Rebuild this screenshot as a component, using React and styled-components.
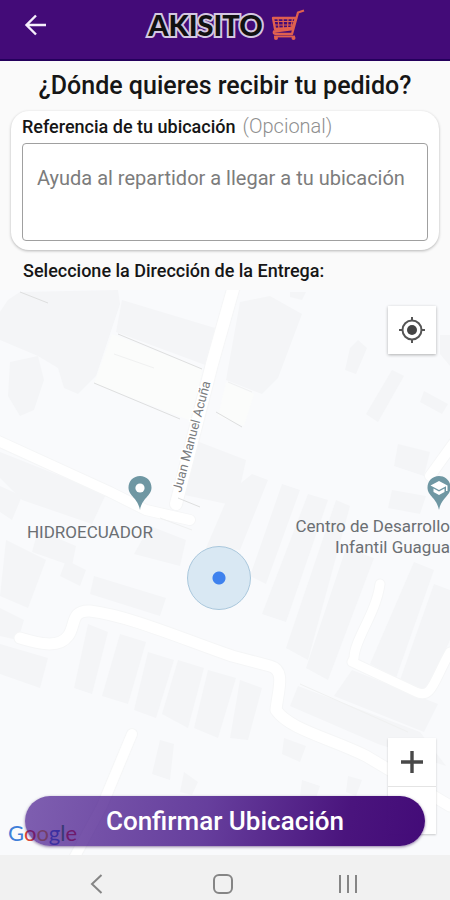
import React from 'react';
import styled, { createGlobalStyle } from 'styled-components';

const parcels = [
	'M8 300 L20 292 L118 290 L120 304 L96 376 L78 394 L64 388 L58 368 L38 356 L0 340 L0 312 Z',
	'M122 300 L215 328 L208 366 L116 332 Z',
	'M10 362 L38 356 L44 380 L34 410 L20 416 L8 396 Z',
	'M240 302 L270 296 L302 314 L278 378 L262 394 L226 380 Z',
	'M290 292 L306 292 L302 300 L290 297 Z',
	'M350 348 L358 340 L367 348 L356 374 L345 370 Z',
	'M392 370 L404 376 L378 422 L366 414 Z',
	'M424 391 L448 404 L442 414 L420 402 Z',
	'M398 444 L430 452 L424 476 L394 466 Z',
	'M194 440 L246 460 L236 506 L180 494 Z',
	'M0 452 L106 494 L92 524 L22 500 L0 478 Z',
	'M22 496 L12 520 L0 512 L0 486 Z',
	'M252 474 L268 480 L240 550 L206 548 L230 492 Z',
	'M282 484 L300 490 L266 584 L250 576 Z',
	'M308 494 L328 500 L286 622 L262 614 Z',
	'M336 500 L350 506 L308 660 L286 648 Z',
	'M346 548 L374 558 L328 680 L306 668 Z',
	'M414 562 L434 570 L396 678 L370 664 Z',
	'M434 584 L450 590 L450 640 L426 694 L400 680 Z',
	'M6 540 L46 560 L28 608 L0 596 Z',
	'M38 530 L76 546 L72 566 L32 552 Z',
	'M66 560 L86 570 L80 586 L60 576 Z',
	'M94 576 L166 598 L160 616 L90 594 Z',
	'M0 608 L24 620 L18 640 L0 636 Z',
	'M0 644 L48 658 L40 688 L0 674 Z',
	'M88 624 L108 632 L92 694 L74 688 Z',
	'M120 634 L146 642 L128 704 L102 696 Z',
	'M148 652 L174 660 L156 718 L134 710 Z',
	'M178 660 L204 668 L188 728 L162 714 Z',
	'M208 670 L236 678 L218 738 L194 728 Z',
	'M240 680 L262 688 L248 740 L230 738 Z',
	'M298 686 L420 732 L446 766 L378 744 L290 706 Z',
	'M352 670 L438 704 L424 732 L334 696 Z',
	'M160 740 L174 744 L170 780 L152 774 Z',
	'M284 738 L306 746 L300 762 L282 754 Z',
	'M302 780 L320 786 L316 798 L300 796 Z',
	'M348 776 L362 780 L356 796 L346 792 Z',
	'M184 772 L198 782 L192 795 L180 792 Z',
	'M440 335 L450 335 L450 366 L440 354 Z',
	'M392 490 L426 496 L420 514 L388 508 Z',
	'M150 526 L186 540 L180 566 L134 554 Z',
];

const streets = [
	{ d: 'M234 286 L212 364 L176 504', width: 12 },
	{ d: 'M-4 440 L110 492 L146 510 L190 520', width: 10 },
	{ d: 'M20 638 C34 642 58 650 68 636 C76 626 70 610 90 611 C130 616 180 638 232 656 L270 666 C286 670 278 690 276 710 C290 730 330 738 366 756 L450 806', width: 11 },
	{ d: 'M380 584 C376 614 354 640 354 658 L352 662 L416 692 C432 700 434 680 450 652', width: 9 },
	{ d: 'M132 734 L102 806 L72 862', width: 10 },
	{ d: 'M456 440 L430 476', width: 10 },
];

const googleLetters = [
	['G', '#3f7fd9'],
	['o', '#dc4437'],
	['o', '#e3a62c'],
	['g', '#3f7fd9'],
	['l', '#35a053'],
	['e', '#dc4437'],
];

const App = () => (
	<Page>
		<GlobalStyle />
		<TopBar>
			<BackButton type="button" aria-label="Volver">
				<svg width="24" height="24" viewBox="0 0 24 24" fill="none" stroke="#f6effc" strokeWidth="2.4">
					<path d="M22 12H3M12 2.5L2.5 12L12 21.5" />
				</svg>
			</BackButton>
			<Logo>
				<LogoText>AKISITO</LogoText>
				<CartIcon />
			</Logo>
		</TopBar>

		<Title>¿Dónde quieres recibir tu pedido?</Title>

		<ReferenceCard>
			<LabelRow>
				<label htmlFor="reference">Referencia de tu ubicación</label>
				<Optional>(Opcional)</Optional>
			</LabelRow>
			<ReferenceInput id="reference" placeholder="Ayuda al repartidor a llegar a tu ubicación" />
		</ReferenceCard>

		<MapHeading>Seleccione la Dirección de la Entrega:</MapHeading>

		<MapArea>
			<MapDrawing />
			<Place $left="31%" $top="33%">
				<Pin />
			</Place>
			<PlaceName $right="66%" $top="41%">
				HIDROECUADOR
			</PlaceName>
			<Place $left="97.5%" $top="33%">
				<Pin school />
			</Place>
			<PlaceName $right="0" $top="40%">
				Centro de Desarrollo
				<br />
				Infantil Guagua
			</PlaceName>
			<CurrentPosition />

			<LocateButton type="button" aria-label="Mi ubicación">
				<svg width="28" height="28" viewBox="0 0 28 28" fill="none" stroke="#555" strokeWidth="2">
					<circle cx="14" cy="14" r="9.5" />
					<circle cx="14" cy="14" r="5" fill="#444" stroke="none" />
					<path d="M14 1V5M14 23V27M1 14H5M23 14H27" />
				</svg>
			</LocateButton>
			<ZoomControls>
				<MapButton type="button" aria-label="Acercar">
					<svg width="22" height="22" viewBox="0 0 22 22" stroke="#484848" strokeWidth="3.4">
						<path d="M11 0V22M0 11H22" />
					</svg>
				</MapButton>
				<MapButton type="button" aria-label="Alejar" />
			</ZoomControls>
			<GoogleMark>
				{googleLetters.map(([letter, color], i) => (
					<Letter key={i} $color={color}>
						{letter}
					</Letter>
				))}
			</GoogleMark>
			<ConfirmButton type="button">Confirmar Ubicación</ConfirmButton>
		</MapArea>

		<SystemNav>
			<NavButton type="button" aria-label="Atrás">
				<svg width="22" height="22" viewBox="0 0 22 22" fill="none" stroke="#858585" strokeWidth="2">
					<path d="M15.5 2L6 11L15.5 20" />
				</svg>
			</NavButton>
			<NavButton type="button" aria-label="Inicio">
				<svg width="22" height="22" viewBox="0 0 22 22" fill="none" stroke="#858585" strokeWidth="2">
					<rect x="2" y="2" width="18" height="18" rx="5" />
				</svg>
			</NavButton>
			<NavButton type="button" aria-label="Recientes">
				<svg width="22" height="22" viewBox="0 0 22 22" fill="none" stroke="#858585" strokeWidth="2">
					<path d="M3 2V20M11 2V20M19 2V20" />
				</svg>
			</NavButton>
		</SystemNav>
	</Page>
);

export default App;

const CartIcon = () => (
	<svg width="34" height="32" viewBox="0 0 34 32" fill="none" stroke="#e0604f" strokeWidth="2.3" strokeLinejoin="round">
		<path d="M33 1.5L27 3.5L21 25H5Q2 25 3 22.5L22 20" />
		<path d="M2 9H25L21.5 19L4 20Z" />
		<path d="M7 9L8 20M12 9L12.5 20M17 9L16.5 20M21.5 9L20 19M3 12.5H24M3.5 16H23" strokeWidth="1.2" />
		<path d="M3 27.5H24" strokeWidth="1.8" />
		<circle cx="5" cy="29" r="2" fill="#e0604f" stroke="none" />
		<circle cx="22.5" cy="29" r="2" fill="#e0604f" stroke="none" />
	</svg>
);

const Pin = ({ school }) => (
	<svg width="24" height="34" viewBox="0 0 24 34">
		<path d="M12 0C5.4 0 0.5 5 0.5 11.5C0.5 20 10 22 12 34C14 22 23.5 20 23.5 11.5C23.5 5 18.6 0 12 0Z" fill="#6f97a3" />
		{school ? (
			<g fill="#fff">
				<path d="M12 5L3.5 9.5L12 14L19 10.3V15H20.5V9.5Z" />
				<path d="M6.5 12.5V16L12 19L17.5 16V12.5L12 15.5Z" />
			</g>
		) : (
			<circle cx="12" cy="12" r="4.6" fill="#fff" />
		)}
	</svg>
);

const MapDrawing = () => (
	<MapSvg viewBox="0 290 450 565" preserveAspectRatio="xMidYMid slice" aria-hidden="true">
		<path d="M112 334 L202 369 L194 422 L94 383 Z" fill="#fbfcfb" />
		<path d="M226 382 L254 394 L244 426 L218 416 Z" fill="#fbfcfb" />
		{parcels.map(d => (
			<path key={d} d={d} fill="#f4f5f7" />
		))}
		{streets.map(street => (
			<g key={street.d} fill="none" strokeLinejoin="round" strokeLinecap="round">
				<path d={street.d} stroke="#f5f6f7" strokeWidth={street.width + 2} />
				<path d={street.d} stroke="#fff" strokeWidth={street.width} />
			</g>
		))}
		<g fill="none" stroke="#dedfdf">
			<path d="M20 292L48 303M118 334L202 369M94 383L180 419M216 412L242 427M178 498L200 507" />
			<path d="M114 354L154 368M228 382L252 392M300 684L408 732M160 518L192 530" stroke="#f0f1f1" />
		</g>
		<StreetName transform="translate(181 493) rotate(-75)">Juan Manuel Acuña</StreetName>
	</MapSvg>
);

const GlobalStyle = createGlobalStyle`
	* {
		box-sizing: border-box;
	}
	body {
		margin: 0;
		background: #fafafa;
		font-family: Roboto, sans-serif;
	}
	button {
		border: 0;
		padding: 0;
		font-family: inherit;
		cursor: pointer;
	}
`;

const Page = styled.div`
	display: flex;
	flex-direction: column;
	min-height: 100vh;
	color: #161616;
	overflow: hidden;
`;

const TopBar = styled.header`
	display: grid;
	grid-template-columns: 72px 1fr 72px;
	align-items: center;
	height: 61px;
	padding-bottom: 10px;
	background: #430b78;
	border-bottom: 2px solid #24005c;
`;

const BackButton = styled.button`
	display: flex;
	align-items: center;
	justify-content: center;
	height: 48px;
	background: transparent;
`;

const Logo = styled.div`
	display: flex;
	align-items: center;
	justify-content: center;
	gap: 8px;
	padding-left: 3px;
`;

const LogoText = styled.span`
	font-family: Lato, sans-serif;
	font-size: 29px;
	font-weight: 900;
	line-height: 32px;
	color: #111;
	-webkit-text-stroke: 4px #d5c8e2;
	paint-order: stroke fill;
`;

const Title = styled.h1`
	margin: 0;
	padding: 10px 0;
	font-size: 25px;
	font-weight: 500;
	line-height: 30px;
	text-align: center;
`;

const ReferenceCard = styled.section`
	margin: 0 11px;
	padding: 2px 11px 9px;
	background: #fff;
	border-radius: 18px;
	box-shadow: 0 1px 3px rgba(0, 0, 0, 0.28);
`;

const LabelRow = styled.div`
	display: flex;
	align-items: center;
	gap: 7px;
	height: 26px;
	margin-bottom: 4px;
	font-size: 18px;
	font-weight: 500;
`;

const Optional = styled.span`
	font-size: 20px;
	font-weight: 300;
	color: #8f8f8f;
`;

const ReferenceInput = styled.textarea`
	display: block;
	width: 100%;
	height: 98px;
	padding: 22px 14px;
	border: 1px solid #a0a0a0;
	border-radius: 4px;
	background: #fff;
	color: #222;
	font-family: inherit;
	font-size: 20px;
	line-height: 24px;
	resize: none;
	overflow: hidden;

	&::placeholder {
		color: #7c7c7c;
		opacity: 1;
	}
`;

const MapHeading = styled.h2`
	margin: 0;
	padding: 9px 23px 7px;
	font-size: 18px;
	font-weight: 500;
	line-height: 24px;
`;

const MapArea = styled.main`
	position: relative;
	flex: 1;
	min-height: 480px;
	background: #f9fafc;
	overflow: hidden;
`;

const MapSvg = styled.svg`
	position: absolute;
	inset: 0;
	width: 100%;
	height: 100%;
`;

const StreetName = styled.text`
	font-size: 13px;
	fill: #7b7d7f;
	stroke: #fff;
	stroke-width: 3px;
	paint-order: stroke fill;
`;

const Place = styled.div`
	position: absolute;
	left: ${props => props.$left};
	top: ${props => props.$top};
	transform: translateX(-50%);
`;

const PlaceName = styled.div`
	position: absolute;
	right: ${props => props.$right};
	top: ${props => props.$top};
	font-size: 17px;
	line-height: 21px;
	text-align: right;
	white-space: nowrap;
	color: #6b6f73;
`;

const CurrentPosition = styled.div`
	position: absolute;
	left: calc(50% - 6px);
	top: 51%;
	width: 64px;
	height: 64px;
	border: 1px solid #a9c7dc;
	border-radius: 50%;
	background: radial-gradient(circle, #3f82ee 6px, #d9e8f3 7px);
	transform: translate(-50%, -50%);
`;

const MapButton = styled.button`
	display: flex;
	align-items: center;
	justify-content: center;
	width: 48px;
	height: 48px;
	background: #fff;

	& + & {
		border-top: 1px solid #e4e4e4;
	}
`;

const LocateButton = styled(MapButton)`
	position: absolute;
	top: 16px;
	right: 14px;
	box-shadow: 0 1px 3px rgba(0, 0, 0, 0.3);
`;

const ZoomControls = styled.div`
	position: absolute;
	right: 14px;
	bottom: 21px;
	box-shadow: 0 1px 2px rgba(0, 0, 0, 0.2);
`;

const GoogleMark = styled.div`
	position: absolute;
	left: 8px;
	bottom: 8px;
	font-family: Lato, sans-serif;
	font-size: 22px;
	line-height: 28px;
`;

const Letter = styled.span`
	color: ${props => props.$color};
`;

const ConfirmButton = styled.button`
	position: absolute;
	left: 25px;
	right: 25px;
	bottom: 9px;
	height: 50px;
	border-radius: 25px;
	background: linear-gradient(100deg, rgba(57, 7, 133, 0.64), rgba(61, 10, 130, 0.78) 45%, rgba(67, 11, 120, 0.96) 80%, #430b78);
	box-shadow: 0 1px 3px rgba(40, 0, 80, 0.5);
	color: #fff;
	font-size: 26px;
	font-weight: 500;
`;

const SystemNav = styled.nav`
	display: flex;
	justify-content: space-between;
	height: 45px;
	padding: 12px 78px 0 73px;
	background: #f1f1f1;
`;

const NavButton = styled.button`
	display: flex;
	align-items: center;
	justify-content: center;
	width: 48px;
	background: transparent;
`;
